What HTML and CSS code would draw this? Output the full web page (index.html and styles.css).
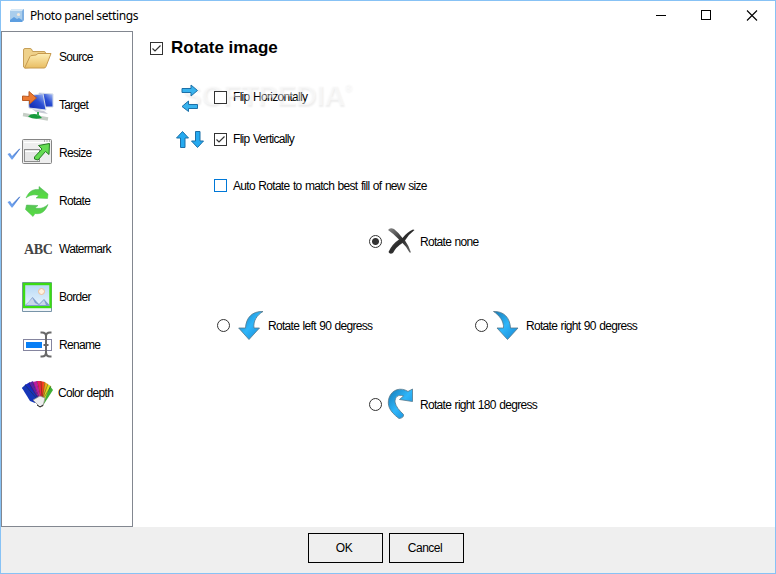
FILE: index.html
```html
<!DOCTYPE html>
<html lang="en">
<head>
    <meta charset="UTF-8">
    <meta name="viewport" content="width=device-width, initial-scale=1.0">
    <title>Photo panel settings</title>
    <link rel="stylesheet" href="styles.css">
</head>
<body>

    <!-- Shared gradients -->
    <svg class="defs" width="0" height="0">
        <defs>
            <linearGradient id="blue" x1="0" y1="0" x2="1" y2="1">
                <stop offset="0" stop-color="#1679b5"/>
                <stop offset="0.5" stop-color="#2fb6fa"/>
                <stop offset="1" stop-color="#1583cf"/>
            </linearGradient>
            <linearGradient id="green" x1="0" y1="0" x2="0" y2="1">
                <stop offset="0" stop-color="#58c258"/>
                <stop offset="1" stop-color="#55e13c"/>
            </linearGradient>
            <linearGradient id="tick" x1="1" y1="0" x2="0" y2="1">
                <stop offset="0" stop-color="#3f6fc4"/>
                <stop offset="1" stop-color="#7eb2fb"/>
            </linearGradient>
            <linearGradient id="folder" x1="0" y1="0" x2="0" y2="1">
                <stop offset="0" stop-color="#fdeeb5"/>
                <stop offset="1" stop-color="#e9bd62"/>
            </linearGradient>
            <linearGradient id="screen" x1="0" y1="1" x2="1" y2="0">
                <stop offset="0" stop-color="#0c1fa5"/>
                <stop offset="0.55" stop-color="#2b4fd4"/>
                <stop offset="1" stop-color="#b9cdf8"/>
            </linearGradient>
            <linearGradient id="sky" x1="0" y1="0" x2="0" y2="1">
                <stop offset="0" stop-color="#b5d8f6"/>
                <stop offset="1" stop-color="#eaf5fd"/>
            </linearGradient>
            <linearGradient id="gray" x1="0" y1="0" x2="1" y2="1">
                <stop offset="0" stop-color="#888"/>
                <stop offset="0.5" stop-color="#2a2a2a"/>
                <stop offset="1" stop-color="#777"/>
            </linearGradient>
        </defs>
    </svg>

    <div class="window">
        <div class="titlebar">
            <svg class="app-icon" width="16" height="16" viewBox="0 0 16 16">
                <path d="M1 3 3 1H15V12L13 14H1Z" fill="#a9cdec"/>
                <path d="M1 3 3 1H15L13 3Z" fill="#d5e8f7"/>
                <path d="M13 3 15 1V12L13 14Z" fill="#7fb0e2"/>
                <path d="M1 12 5 9 8 11 10 10 13 12V14H1Z" fill="#5d9ee0"/>
                <circle cx="9.500" cy="6.500" r="1.600" fill="#f3e8dc"/>
            </svg>
            <span class="caption">Photo panel settings</span>
            <svg class="controls" width="120" height="30" viewBox="0 0 120 30" fill="none" stroke="#000">
                <path d="M6 14.500H16"/>
                <rect x="51.500" y="9.500" width="9" height="9"/>
                <path d="M97 9.500 107 19.500M107 9.500 97 19.500" stroke-width="1.100"/>
            </svg>
        </div>

        <div class="content">
            <div class="sidebar">
                <div class="item">
                    <span class="mark"></span>
                    <svg width="32" height="32" viewBox="0 0 32 32">
                        <path d="M1.500 25V8Q1.500 6.500 3 6.500H8Q9.500 6.500 10 8L10.500 9.500H22Q23.500 9.500 23.500 11V24L3 26Z" fill="#efd18a" stroke="#c69f58"/>
                        <path d="M2.500 26 8 14.500Q8.500 13.500 10 13.500L14 13 16 11.500H29L24 24.500Q23.500 26 22 26Z" fill="url(#folder)" stroke="#c79a4e"/>
                    </svg>
                    <span class="name">Source</span>
                </div>
                <div class="item">
                    <span class="mark"></span>
                    <svg width="32" height="32" viewBox="0 0 32 32">
                        <path d="M17 3 31 4V17L19 17Z" fill="url(#screen)" stroke="#d4dce8"/>
                        <path d="M6 6 21 3.500 24 20 7 18Z" fill="url(#screen)" stroke="#d4dce8"/>
                        <path d="M10 19 22 21 26 24 14 22Z" fill="#c7cad4"/>
                        <path d="M1 24.500 26 29" stroke="#c6cec6" stroke-width="3.500"/>
                        <path d="M6 26.500Q10 22.500 17 25L20 28Q12 30 6 26.500Z" fill="#159b3c"/>
                        <path d="M16 26V22" stroke="#35aa55" stroke-width="2"/>
                        <path d="M0.500 6 7 6.500V1.500L14.500 8 7.500 14V10.500L.5 10.500Z" fill="#ec7a32" stroke="#bb5b24"/>
                    </svg>
                    <span class="name">Target</span>
                </div>
                <div class="item">
                    <svg class="mark" width="14" height="14" viewBox="0 0 14 14"><path d="M0.500 7 3 6 5 9 12 2 13.500 1.500 5.500 12.500 4.500 12.500Z" fill="url(#tick)"/></svg>
                    <svg width="32" height="32" viewBox="0 0 32 32">
                        <rect x="0.500" y="1.500" width="29" height="24" rx="1" fill="#eeeeee" stroke="#858585"/>
                        <path d="M2 4.500H28" stroke="#fff"/>
                        <path d="M22 3H28" stroke="#777" stroke-dasharray="1 1.500"/>
                        <rect x="2.500" y="11.500" width="15" height="12" fill="#e6e6e6" stroke="#8d8d8d"/>
                        <path d="M3 13.500H17" stroke="#fff"/>
                        <path d="M12.500 19 20 11 16.500 7.500 27.500 5.500 27 16.500 23.500 13.500 16 22 12.500 21Z" fill="#65dc53" stroke="#277b24"/>
                    </svg>
                    <span class="name">Resize</span>
                </div>
                <div class="item">
                    <svg class="mark" width="14" height="14" viewBox="0 0 14 14"><path d="M0.500 7 3 6 5 9 12 2 13.500 1.500 5.500 12.500 4.500 12.500Z" fill="url(#tick)"/></svg>
                    <svg width="32" height="32" viewBox="0 0 32 32" fill="url(#green)" stroke="#46b94d" stroke-width="0.500">
                        <path d="M4 12C7 5 11 3 17 3.500L17 .5 26 8 25.500 12.500 14 12 17 9.500C12 8 8 9 4 12Z"/>
                        <path d="M26 18.500C23 26 19 28.500 13 27.500L11 30.500 3.500 23.500 4.500 19 16 19.500 13 22C18 23 22 22 26 18.500Z"/>
                    </svg>
                    <span class="name">Rotate</span>
                </div>
                <div class="item">
                    <span class="mark"></span>
                    <span class="abc">ABC</span>
                    <span class="name">Watermark</span>
                </div>
                <div class="item">
                    <span class="mark"></span>
                    <svg width="32" height="32" viewBox="0 0 32 32">
                        <path d="M0.500 .5H29.500V29.500H.5Z" fill="#f0f5f9" stroke="#7894a8"/>
                        <rect x="2" y="2" width="26.500" height="23" fill="url(#sky)" stroke="#3bdc12" stroke-width="2.400"/>
                        <circle cx="19.500" cy="9.500" r="3" fill="#fff1df" stroke="#efbd96"/>
                        <path d="M3 23Q7 20 10.500 15L15 20 17 22 22 17 27.500 23V24H3Z" fill="#7f9dcd"/>
                        <path d="M4 23 10.500 16 13 21 17 23 22 18 24 23Z" fill="#c9d7ec"/>
                    </svg>
                    <span class="name">Border</span>
                </div>
                <div class="item">
                    <span class="mark"></span>
                    <svg width="32" height="32" viewBox="0 0 32 32">
                        <rect x="1.500" y="9.500" width="28" height="11" fill="#fff" stroke="#85859f"/>
                        <rect x="4" y="12" width="16" height="6" fill="#087ff5"/>
                        <path d="M18.500 2.500H20Q24 2.500 24 6V22Q24 26.500 20 26.500H18.500M29.500 2.500H28Q24 2.500 24 6M24 22Q24 26.500 28 26.500H29.500M21.500 15H26.500" fill="none" stroke="#686868" stroke-width="2"/>
                    </svg>
                    <span class="name">Rename</span>
                </div>
                <div class="item">
                    <span class="mark"></span>
                    <svg width="32" height="32" viewBox="0 0 32 32">
                        <path d="M20 29 0 10 4 6Z" fill="#123a9a"/>
                        <path d="M20 29 3 7 8 4Z" fill="#1728c4"/>
                        <path d="M20 29 7 5 11 3Z" fill="#5a23a8"/>
                        <path d="M20 29 11 4 15 3Z" fill="#bc1aa4"/>
                        <path d="M20 29 15 3 19 3Z" fill="#ed1c5f"/>
                        <path d="M20 29 18 3 23 4Z" fill="#f23b20"/>
                        <path d="M20 29 22 4 26 6Z" fill="#f6a01a"/>
                        <path d="M20 29 25 6 29 8Z" fill="#d9dd25"/>
                        <path d="M20 29 28 8 31 12Z" fill="#3fae35"/>
                        <path d="M0 10 8 23 13 25 17 20 4 7Z" fill="#1636b8"/>
                        <path d="M3 7 16 22M7 5 17 22M11 4 18 22M15 3 19 22M19 3 20 22M23 4 20 22M26 6 20 22M29 8 20 23" stroke="#222" stroke-width="0.400"/>
                        <path d="M11 22 18 18 23 20 21 28 18 29Z" fill="#eeeeee" stroke="#888" stroke-width="0.700"/>
                        <path d="M15 27 18 29 21 27" fill="none" stroke="#222"/>
                    </svg>
                    <span class="name shifted">Color depth</span>
                </div>
            </div>

            <div class="panel">
                <div class="heading">
                    <span class="checkbox checked"><svg width="11" height="11" viewBox="0 0 11 11"><path d="M1.500 5.500 4 8 9.500 2.500"/></svg></span>
                    <h1>Rotate image</h1>
                </div>

                <div class="option flip-h">
                    <svg width="30" height="30" viewBox="0 0 30 30" fill="#38b3ee" stroke="#1d70a8" stroke-linejoin="round">
                        <path d="M6 6.500H15V3L21.500 8.500 15 14V10.500H6Z"/>
                        <path d="M21.500 22.500H12.500V19L6 24.500 12.500 29.500V26.500H21.500Z"/>
                    </svg>
                    <span class="checkbox"></span>
                    <span class="label">Flip Horizontally</span>
                </div>
                <div class="option flip-v">
                    <svg width="30" height="30" viewBox="0 0 30 30" fill="#25aaf0" stroke="#1d70a8" stroke-linejoin="round">
                        <path d="M4.500 23.500V14H.5L6.500 7.500 12.500 14H9V23.500Z"/>
                        <path d="M19.500 7.500V17H15.500L21.500 23.500 27.500 17H24V7.500Z"/>
                    </svg>
                    <span class="checkbox checked"><svg width="11" height="11" viewBox="0 0 11 11"><path d="M1.500 5.500 4 8 9.500 2.500"/></svg></span>
                    <span class="label">Flip Vertically</span>
                </div>
                <div class="option auto">
                    <span class="checkbox hot"></span>
                    <span class="label">Auto Rotate to match best fill of new size</span>
                </div>

                <div class="choice none">
                    <span class="radio selected"></span>
                    <svg width="32" height="32" viewBox="0 0 32 32">
                        <path d="M1 5Q3 2 7 4 12 8 15.500 13 20 7 26 4.500L27.500 5Q22 9 18 15.500 22 21 24 27.500L22.500 27.500Q19 21 15.500 18 9 22 6 28 3 30 1.500 27 5 19 12 14.500 7 9 1 5Z" fill="url(#gray)"/>
                    </svg>
                    <span class="label">Rotate none</span>
                </div>

                <div class="sides">
                    <div class="choice left">
                        <span class="radio"></span>
                        <svg width="32" height="32" viewBox="0 0 32 32"><path d="M25 2.500C14 2 8 9 7.500 19H.7L11 30.500 21.500 19H16C15 12 19 6 25 2.500Z" fill="url(#blue)" stroke="#55778a" stroke-width="0.800"/></svg>
                        <span class="label">Rotate left 90 degress</span>
                    </div>
                    <div class="choice right">
                        <span class="radio"></span>
                        <svg width="32" height="32" viewBox="0 0 32 32"><path d="M0.500 2.500C11 2 17 9 17.500 19H25L14.500 30.500 4 19H10.500C11 12 6 6 .5 2.500Z" fill="url(#blue)" stroke="#55778a" stroke-width="0.800"/></svg>
                        <span class="label">Rotate right 90 degress</span>
                    </div>
                </div>

                <div class="choice half">
                    <span class="radio"></span>
                    <svg width="32" height="32" viewBox="0 0 32 32"><path d="M12 30.500C2 23 0 17 2 10 5 1 14-1 21 3.500L25.500 1V13.500L12.500 11.500 16.500 8C11 6 8 9 8 14 9 19 12 22 16.500 26.500Q17 30 12 30.500Z" fill="url(#blue)" stroke="#55778a" stroke-width="0.800"/></svg>
                    <span class="label">Rotate right 180 degress</span>
                </div>

                <div class="overlay">SOFTPEDIA<sup>®</sup></div>
            </div>
        </div>

        <div class="footer">
            <button>OK</button>
            <button>Cancel</button>
        </div>
    </div>

</body>
</html>
```
FILE: styles.css
```css
body {
    margin: 0;
    font-family: "Liberation Sans", Arial, sans-serif;
    font-size: 12px;
    letter-spacing: -0.7px;
    word-spacing: 0.8px;
    color: #000;
}

.defs {
    position: absolute;
}

.window {
    box-sizing: border-box;
    width: 776px;
    height: 574px;
    border: 1px solid #87c2f5;
    background-color: white;
    display: flex;
    flex-direction: column;
}

.titlebar {
    height: 30px;
    display: flex;
    align-items: center;
    padding-left: 8px;
}

.caption {
    margin-left: 5px;
    padding-bottom: 2px;
    font-family: "Noto Sans", "Open Sans", sans-serif;
    font-size: 12px;
    letter-spacing: -0.4px;
    word-spacing: 0;
}

.controls {
    margin: 0 5px 0 auto;
}

.content {
    display: flex;
    height: 496px;
}

/* Left page list */
.sidebar {
    box-sizing: border-box;
    width: 132px;
    border: 1px solid #828790;
    padding-top: 2px;
}

.item {
    height: 48px;
    display: flex;
    align-items: center;
    white-space: nowrap;
}

.mark {
    width: 14px;
    margin: 0 1px 0 5px;
}

.abc {
    width: 30px;
    padding-left: 2px;
    padding-bottom: 1px;
    font-family: "Liberation Serif", serif;
    font-size: 14px;
    font-weight: bold;
    letter-spacing: -0.4px;
    color: #444;
}

.name {
    margin-left: 5px;
    padding-bottom: 3px;
}

.shifted {
    margin-left: 4px;
}

/* Right side */
.panel {
    position: relative;
    flex: 1;
}

.heading {
    height: 20px;
    padding: 7px 0 0 17px;
    display: flex;
    align-items: center;
}

h1 {
    margin: 0 0 0 8px;
    font-size: 17px;
    line-height: 20px;
    letter-spacing: 0;
    word-spacing: 0;
}

.checkbox {
    box-sizing: border-box;
    width: 13px;
    height: 13px;
    border: 1px solid #333;
    background-color: white;
    display: flex;
}

.checkbox path {
    fill: none;
    stroke: #333;
    stroke-width: 1.2;
}

.hot {
    border-color: #0078d7;
}

.option {
    height: 30px;
    display: flex;
    align-items: center;
    padding-left: 43px;
}

.option .checkbox {
    margin-left: 8px;
}

.option .label {
    margin-left: 6px;
}

.flip-h {
    margin-top: 24px;
}

.flip-v {
    margin-top: 12px;
}

.auto {
    margin-top: 16px;
    padding-left: 73px;
}

.auto .label {
    padding-top: 2px;
}

.choice {
    height: 32px;
    display: flex;
    align-items: center;
    white-space: nowrap;
}

.choice svg {
    margin-left: 5px;
}

.choice .label {
    padding: 2px 0 0 1px;
}

.radio {
    box-sizing: border-box;
    width: 13px;
    height: 13px;
    border: 1px solid #333;
    border-radius: 50%;
}

.selected {
    background: radial-gradient(circle, #333 3px, white 4px);
}

.none {
    margin: 25px 0 0 236px;
}

.sides {
    display: flex;
    margin: 52px 0 0 84px;
}

.left {
    width: 258px;
}

.left svg {
    margin: 0 -3px 0 8px;
}

.half {
    margin: 47px 0 0 236px;
}

/* Faint mark lying over the first option */
.overlay {
    position: absolute;
    left: 49px;
    top: 46px;
    font-size: 29px;
    font-weight: bold;
    line-height: 36px;
    letter-spacing: -0.4px;
    color: rgba(255, 255, 255, 0.45);
    text-shadow: 1px 2px 2px rgba(0, 0, 0, 0.07);
    pointer-events: none;
}

.flip-h .checkbox,
.flip-h svg {
    position: relative;
    z-index: 1;
}

.overlay sup {
    font-size: 10px;
    vertical-align: 14px;
    line-height: 0;
}

.footer {
    flex: 1;
    background-color: #efefef;
    display: flex;
    align-items: flex-start;
    gap: 6px;
    padding: 6px 0 0 307px;
}

button {
    width: 75px;
    height: 30px;
    padding: 0 3px 0 0;
    border: 1px solid #000;
    background-color: #efefef;
    font-family: inherit;
    font-size: 12px;
    letter-spacing: -0.5px;
}
```
